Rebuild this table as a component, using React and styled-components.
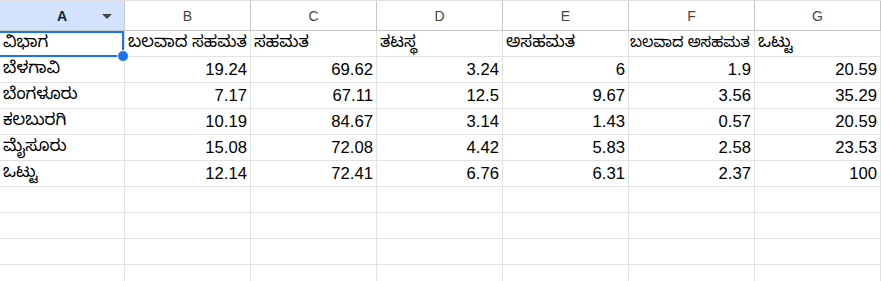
import * as React from "react";
import styled, { createGlobalStyle } from "styled-components";

const GlobalStyle = createGlobalStyle`
  html, body {
    margin: 0;
    padding: 0;
    background: #ffffff;
    overflow: hidden;
  }
  body {
    font-family: "Liberation Sans", Arial, "Noto Sans Kannada", "Noto Sans", sans-serif;
  }
`;

const Sheet = styled.div`
  width: 881px;
  height: 281px;
  overflow: hidden;
  position: relative;
`;

const Row = styled.div`
  display: grid;
  grid-template-columns: 125px repeat(6, 126px);
  height: 26px;
  box-sizing: border-box;
  border-bottom: 1px solid #e1e1e1;
`;

const HeaderRow = styled(Row)`
  height: 31px;
  border-top: 1px solid #e1e1e1;
  border-bottom: 1px solid #c4c7c5;
`;

const HeadCell = styled.div`
  position: relative;
  display: flex;
  align-items: center;
  justify-content: center;
  box-sizing: border-box;
  border-right: 1px solid #c4c7c5;
  background: ${(p) => (p.$active ? "#d3e3fd" : "#ffffff")};
  color: ${(p) => (p.$active ? "#0b1f3f" : "#444746")};
  font-weight: ${(p) => (p.$active ? 700 : 400)};
  font-size: 14px;
`;

const Caret = styled.span`
  position: absolute;
  right: 12px;
  top: 13px;
  width: 0;
  height: 0;
  border-left: 5px solid transparent;
  border-right: 5px solid transparent;
  border-top: 5px solid #444746;
`;

const Cell = styled.div`
  display: flex;
  align-items: center;
  justify-content: ${(p) => (p.$num ? "flex-end" : "flex-start")};
  box-sizing: border-box;
  padding: 0 ${(p) => (p.$tight ? "1px" : "3px")};
  border-right: 1px solid #e1e1e1;
  font-size: ${(p) => (p.$tight ? "15px" : "16.67px")};
  color: #000000;
  white-space: nowrap;
  overflow: hidden;
`;

const Selection = styled.div`
  position: absolute;
  left: -2px;
  top: 31px;
  width: 126px;
  height: 26px;
  box-sizing: border-box;
  border: 2px solid #1a73e8;
  pointer-events: none;
`;

const Handle = styled.div`
  position: absolute;
  left: 117px;
  top: 50px;
  width: 10px;
  height: 10px;
  border-radius: 50%;
  background: #1a73e8;
  border: 1px solid #ffffff;
`;

const columns = ["A", "B", "C", "D", "E", "F", "G"];

const header = ["ವಿಭಾಗ", "ಬಲವಾದ ಸಹಮತ", "ಸಹಮತ", "ತಟಸ್ಥ", "ಅಸಹಮತ", "ಬಲವಾದ ಅಸಹಮತ", "ಒಟ್ಟು"];

const data = [
  ["ಬೆಳಗಾವಿ", "19.24", "69.62", "3.24", "6", "1.9", "20.59"],
  ["ಬೆಂಗಳೂರು", "7.17", "67.11", "12.5", "9.67", "3.56", "35.29"],
  ["ಕಲಬುರಗಿ", "10.19", "84.67", "3.14", "1.43", "0.57", "20.59"],
  ["ಮೈಸೂರು", "15.08", "72.08", "4.42", "5.83", "2.58", "23.53"],
  ["ಒಟ್ಟು", "12.14", "72.41", "6.76", "6.31", "2.37", "100"],
];

const emptyRows = 5;

export default function App() {
  return (
    <>
      <GlobalStyle />
      <Sheet>
        <HeaderRow>
          {columns.map((c, i) => (
            <HeadCell key={c} $active={i === 0}>
              {c}
              {i === 0 && <Caret />}
            </HeadCell>
          ))}
        </HeaderRow>
        <Row>
          {header.map((h, i) => (
            <Cell key={i} $tight={i === 5}>
              {h}
            </Cell>
          ))}
        </Row>
        {data.map((r, ri) => (
          <Row key={ri}>
            {r.map((v, ci) => (
              <Cell key={ci} $num={ci > 0}>
                {v}
              </Cell>
            ))}
          </Row>
        ))}
        {Array.from({ length: emptyRows }).map((_, ri) => (
          <Row key={"e" + ri}>
            {columns.map((c) => (
              <Cell key={c} />
            ))}
          </Row>
        ))}
        <Selection />
        <Handle />
      </Sheet>
    </>
  );
}
